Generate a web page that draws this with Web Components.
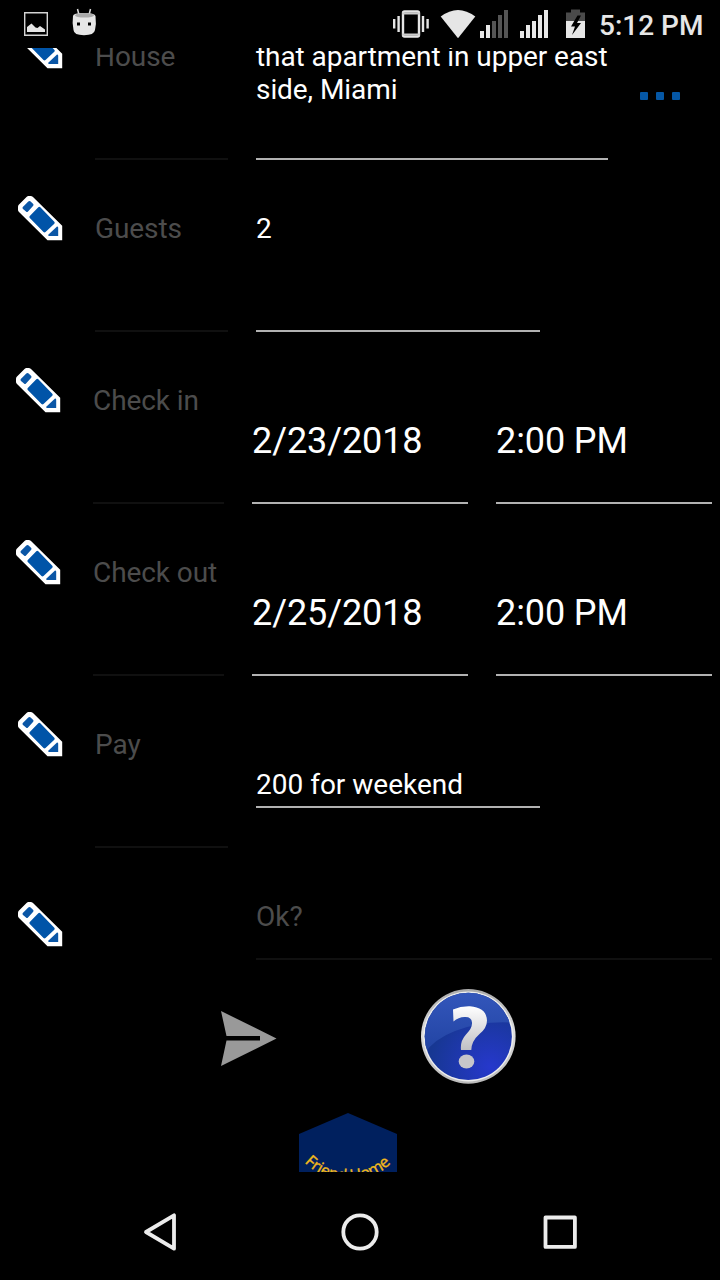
<!DOCTYPE html>
<html lang="en">
<head>
<meta charset="utf-8">
<title>Friend Home</title>
<style>
  html, body {
    margin: 0;
    background: #000;
  }
  body {
    font-family: Roboto, "Liberation Sans", sans-serif;
    color: #fff;
  }
</style>
</head>
<body>
<request-screen></request-screen>

<script>
'use strict';

// Attaches an open shadow root holding the given markup
function attach(host, html) {
	const template = document.createElement('template');
	template.innerHTML = html;
	const shadow = host.attachShadow({mode: 'open'});
	shadow.appendChild(template.content.cloneNode(true));
	return shadow;
}

class StatusBar extends HTMLElement {
	constructor() {
		super();
		attach(this, `
<style>
  :host {
    display: flex;
    justify-content: space-between;
    height: 48px;
    background: #000;
    color: #e6e6e6;
  }
  svg {
    display: block;
    flex: none;
  }
  .right {
    display: flex;
  }
  .clock {
    width: 121px;
    font-size: 28px;
    font-weight: 500;
    line-height: 51px;
    white-space: nowrap;
  }
</style>
<svg width="120" height="48" viewBox="0 0 120 48">
  <path d="M24.7 12.7h22.6v22.6H24.7z" fill="none" stroke="#d4d4d4" stroke-width="1.4"/>
  <path d="M27 32v-5l4.500-3.500 4 4 2 .5 2.500-2 5 3.500V32z" fill="#e6e6e6"/>
  <path d="M77.500 9l1.500 6M90.500 9L89 15" stroke="#ddd" stroke-width="1.500"/>
  <path d="M73 16q0-3 11-3t11.500 3q1 8-.5 14-.8 5.200-11 5.200T73.500 30Q72 23 73 16z" fill="#e6e6e6"/>
  <ellipse cx="84.500" cy="15.300" rx="9.500" ry="2.300" fill="#aaa"/>
  <path d="M77 22.500h3v3h-3zM88 22.500h3v3h-3z" fill="#000"/>
</svg>
<div class="right">
  <svg width="209" height="48" viewBox="390 0 209 48">
    <rect x="403" y="11.500" width="16" height="25" rx="1.500" fill="none" stroke="#e6e6e6" stroke-width="2.400"/>
    <path d="M402 13.500h18M402 34.500h18" stroke="#ccc" stroke-width="2"/>
    <path d="M394.200 19v9.500M398.600 16v16M423 16v16M427.600 19v9.500" stroke="#e6e6e6" stroke-width="2.400"/>
    <path d="M440.700 16.500Q458 3.300 475.300 16.500L458 38.200z" fill="#e6e6e6"/>
    <path d="M480 31h4v7h-4zM486 25h4v13h-4zM520 31h4v7h-4zM526 25h4v13h-4zM532 21h4v17h-4zM538 15h4v23h-4zM544 10h4v28h-4z" fill="#e8e8e8"/>
    <path d="M492 21h4v17h-4zM498 15h4v23h-4zM504 10h4v28h-4z" fill="#555"/>
    <path d="M566 12.500h5V9.500h9v3h5v9h-19z" fill="#4a4a4a"/>
    <path d="M566 21h19v17h-19z" fill="#e6e6e6"/>
    <path d="M577.500 15.500l-6.500 11h4l-3 8.500 9-12h-4l4-7.500z" fill="#000"/>
  </svg>
  <div class="clock">5:12 PM</div>
</div>`);
	}
}

customElements.define('status-bar', StatusBar);

class PencilIcon extends HTMLElement {
	constructor() {
		super();
		attach(this, `
<style>
  :host {
    display: block;
    width: 46px;
    height: 46px;
  }
  svg {
    display: block;
  }
</style>
<svg width="46" height="46" viewBox="0 0 46 46">
  <path d="M0 10.800Q0 9.500 1 8.500L8.500 1Q9.500 0 10.500 0h2q1.500 0 2.500 1L44.200 29.700V44.200H29.500L1 16Q0 15 0 14z" fill="#fff"/>
  <path d="M10.300 5.500q1-1 2-.2l2.700 2.500q1 1 .2 2L10 15.500q-1 1-2 0L5 13q-1-1-.2-2z" fill="#0a56a6"/>
  <path d="M20.300 11.300q1-1 2 0L36.300 25.700q.9 1 0 2L27.500 36q-1 .9-2 0L11.800 22q-1-1 0-2z" fill="#0054a8"/>
  <path d="M39 30.500q1.200 0 1.200 1.200V40H31q-1.500-.5-.5-1.500z" fill="#0a56a6"/>
</svg>`);
	}
}

customElements.define('pencil-icon', PencilIcon);

// Underlined text box; the "hint" attribute dims both text and line
class EditField extends HTMLElement {
	constructor() {
		super();
		attach(this, `
<style>
  :host {
    display: flex;
    flex: none;
    flex-direction: column;
    justify-content: flex-end;
    box-sizing: border-box;
    width: var(--width, 284px);
    height: var(--height, 120px);
    padding-bottom: var(--drop, 68px);
    border-bottom: 2px solid #b2b2b2;
    font-size: 28px;
    line-height: 33px;
  }
  :host([hint]) {
    color: #4c4c4c;
    border-color: #101010;
  }
  :host([large]) {
    font-size: 36px;
    line-height: 42px;
    letter-spacing: -0.1px;
  }
</style>
<slot></slot>`);
	}
}

customElements.define('edit-field', EditField);

class FormRow extends HTMLElement {
	static get observedAttributes() {
		return ['label'];
	}

	constructor() {
		super();
		attach(this, `
<style>
  :host {
    display: grid;
    grid-template-columns: 77px 161px 1fr;
    box-sizing: border-box;
    height: 172px;
    padding-left: 18px;
  }
  :host([dated]) {
    grid-template-columns: 77px 159px 1fr;
    padding-left: 16px;
  }
  :host([last]) {
    height: 112px;
  }
  pencil-icon {
    margin-top: 24px;
  }
  :host([last]) pencil-icon {
    margin-top: 42px;
  }
  .label {
    --width: 133px;
    --height: 120px;
    --drop: 85px;
    margin-top: 40px;
    white-space: nowrap;
    letter-spacing: -0.08px;
  }
  :host([dated]) .label {
    --width: 131px;
  }
  :host([last]) .label {
    visibility: hidden;
  }
  .value {
    display: flex;
    align-items: flex-start;
    gap: 28px;
    padding-top: 40px;
  }
</style>
<pencil-icon></pencil-icon>
<edit-field class="label" hint></edit-field>
<div class="value"><slot></slot></div>`);
	}

	attributeChangedCallback(name, oldValue, newValue) {
		this.shadowRoot.querySelector('.label').textContent = newValue;
	}
}

customElements.define('form-row', FormRow);

class MoreButton extends HTMLElement {
	constructor() {
		super();
		attach(this, `
<style>
  :host {
    display: flex;
    gap: 8px;
    margin: 52px 0 0 4px;
  }
  i {
    width: 8px;
    height: 8px;
    background: #0557a5;
    border-radius: 1px;
  }
</style>
<i></i><i></i><i></i>`);
	}
}

customElements.define('more-button', MoreButton);

class ActionBar extends HTMLElement {
	constructor() {
		super();
		attach(this, `
<style>
  :host {
    display: flex;
    gap: 142px;
    height: 128px;
    padding: 16px 0 0 220px;
    box-sizing: border-box;
  }
  svg {
    display: block;
    flex: none;
  }
</style>
<svg width="58" height="100" viewBox="220 988 58 100">
  <path d="M221 1011L276.500 1038.500 221 1066l5.500-25.500H260v-4.500H226.500z" fill="#999"/>
</svg>
<svg width="98" height="98" viewBox="420 988 98 98">
  <defs>
    <linearGradient id="rim" x1="0" y1="0" x2="0" y2="1">
      <stop offset="0" stop-color="#aaa"/>
      <stop offset=".45" stop-color="#ddd"/>
      <stop offset="1" stop-color="#bbb"/>
    </linearGradient>
    <linearGradient id="top" x1="0" y1="0" x2="0" y2="1">
      <stop offset="0" stop-color="#3457bc"/>
      <stop offset="1" stop-color="#2143a2"/>
    </linearGradient>
    <radialGradient id="low" cx=".75" cy=".85" r=".7">
      <stop offset="0" stop-color="#2638cc"/>
      <stop offset="1" stop-color="#173792"/>
    </radialGradient>
    <linearGradient id="mark" x1="0" y1="0" x2="0" y2="1">
      <stop offset="0" stop-color="#fff"/>
      <stop offset="1" stop-color="#bfbfc4"/>
    </linearGradient>
    <clipPath id="disc"><circle cx="468.300" cy="1036.400" r="43.600"/></clipPath>
  </defs>
  <circle cx="468.300" cy="1036.400" r="47.300" fill="url(#rim)"/>
  <circle cx="468.300" cy="1036.400" r="45" fill="#eee"/>
  <circle cx="468.300" cy="1036.400" r="43.600" fill="url(#low)"/>
  <path d="M420 990h97v33Q484 1020 455 1031 434 1039 424 1054h-4z" fill="url(#top)" clip-path="url(#disc)"/>
  <path d="M453 1009.500Q461 1006 470 1006.300 486.500 1007.500 487 1020.500 487 1028 479.500 1034 471.500 1041 471.300 1050H461Q460 1041 466 1034.500 472.500 1028 472 1022.500 471.500 1016.500 464.500 1017 458.500 1017 453.500 1021.500z" fill="url(#mark)"/>
  <ellipse cx="466.500" cy="1061.500" rx="7.800" ry="7" fill="#c6c6ca"/>
</svg>`);
	}
}

customElements.define('action-bar', ActionBar);

class HomeLogo extends HTMLElement {
	constructor() {
		super();
		attach(this, `
<style>
  :host {
    display: block;
    margin: 13px 0 0 298px;
  }
  svg {
    display: block;
  }
  text {
    font: 16px "Noto Sans", "Open Sans", sans-serif;
    fill: #f0b81c;
    stroke: #f0b81c;
    stroke-width: .3px;
  }
</style>
<svg width="100" height="110" viewBox="298 1113 100 110">
  <path d="M348 1113l49 21v66l-49 21-49-21v-66z" fill="#00205e"/>
  <path id="arc" d="M304.500 1162.500A60.500 60.500 0 0 0 391.500 1162.500" fill="none"/>
  <text textLength="96"><textPath href="#arc">Friend Home</textPath></text>
</svg>`);
	}
}

customElements.define('home-logo', HomeLogo);

class NavigationBar extends HTMLElement {
	constructor() {
		super();
		attach(this, `
<style>
  :host {
    display: flex;
    justify-content: space-around;
    align-items: center;
    height: 96px;
    padding: 0 60px;
  }
  svg {
    display: block;
    fill: none;
    stroke: #ececec;
    stroke-width: 3.800;
    stroke-linejoin: round;
  }
</style>
<svg width="40" height="40" viewBox="0 0 40 40"><path d="M6 20L34 3.300V36.700z"/></svg>
<svg width="40" height="40" viewBox="0 0 40 40"><circle cx="20" cy="20" r="16.700"/></svg>
<svg width="40" height="40" viewBox="0 0 40 40"><path d="M5.500 5.500h29.400v29.400H5.500z"/></svg>`);
	}
}

customElements.define('navigation-bar', NavigationBar);

class RequestScreen extends HTMLElement {
	constructor() {
		super();
		attach(this, `
<style>
  :host {
    display: flex;
    flex-direction: column;
    width: 720px;
    height: 1280px;
    overflow: hidden;
    background: #000;
  }
  main {
    height: 1124px;
    margin-bottom: 12px;
    overflow: hidden;
  }
  /* the form is scrolled up under the status bar */
  .form {
    margin-top: -48px;
  }
  .house {
    --width: 352px;
    --drop: 52px;
    white-space: nowrap;
    letter-spacing: -0.07px;
  }
  .guests {
    --drop: 85px;
  }
  .date {
    --width: 216px;
    --drop: 40px;
  }
  .pay {
    --height: 80px;
    --drop: 5px;
  }
  .note {
    --width: 456px;
    --height: 60px;
    --drop: 25px;
  }
</style>
<status-bar></status-bar>
<main>
  <div class="form">
    <form-row label="House">
      <edit-field class="house">that apartment in upper east<br>side, Miami</edit-field>
      <more-button></more-button>
    </form-row>
    <form-row label="Guests"><edit-field class="guests">2</edit-field></form-row>
    <form-row label="Check in" dated>
      <edit-field class="date" large>2/23/2018</edit-field>
      <edit-field class="date" large>2:00 PM</edit-field>
    </form-row>
    <form-row label="Check out" dated>
      <edit-field class="date" large>2/25/2018</edit-field>
      <edit-field class="date" large>2:00 PM</edit-field>
    </form-row>
    <form-row label="Pay"><edit-field class="pay">200 for weekend</edit-field></form-row>
    <form-row last><edit-field class="note" hint>Ok?</edit-field></form-row>
  </div>
  <action-bar></action-bar>
  <home-logo></home-logo>
</main>
<navigation-bar></navigation-bar>`);
	}
}

customElements.define('request-screen', RequestScreen);
</script>
</body>
</html>
